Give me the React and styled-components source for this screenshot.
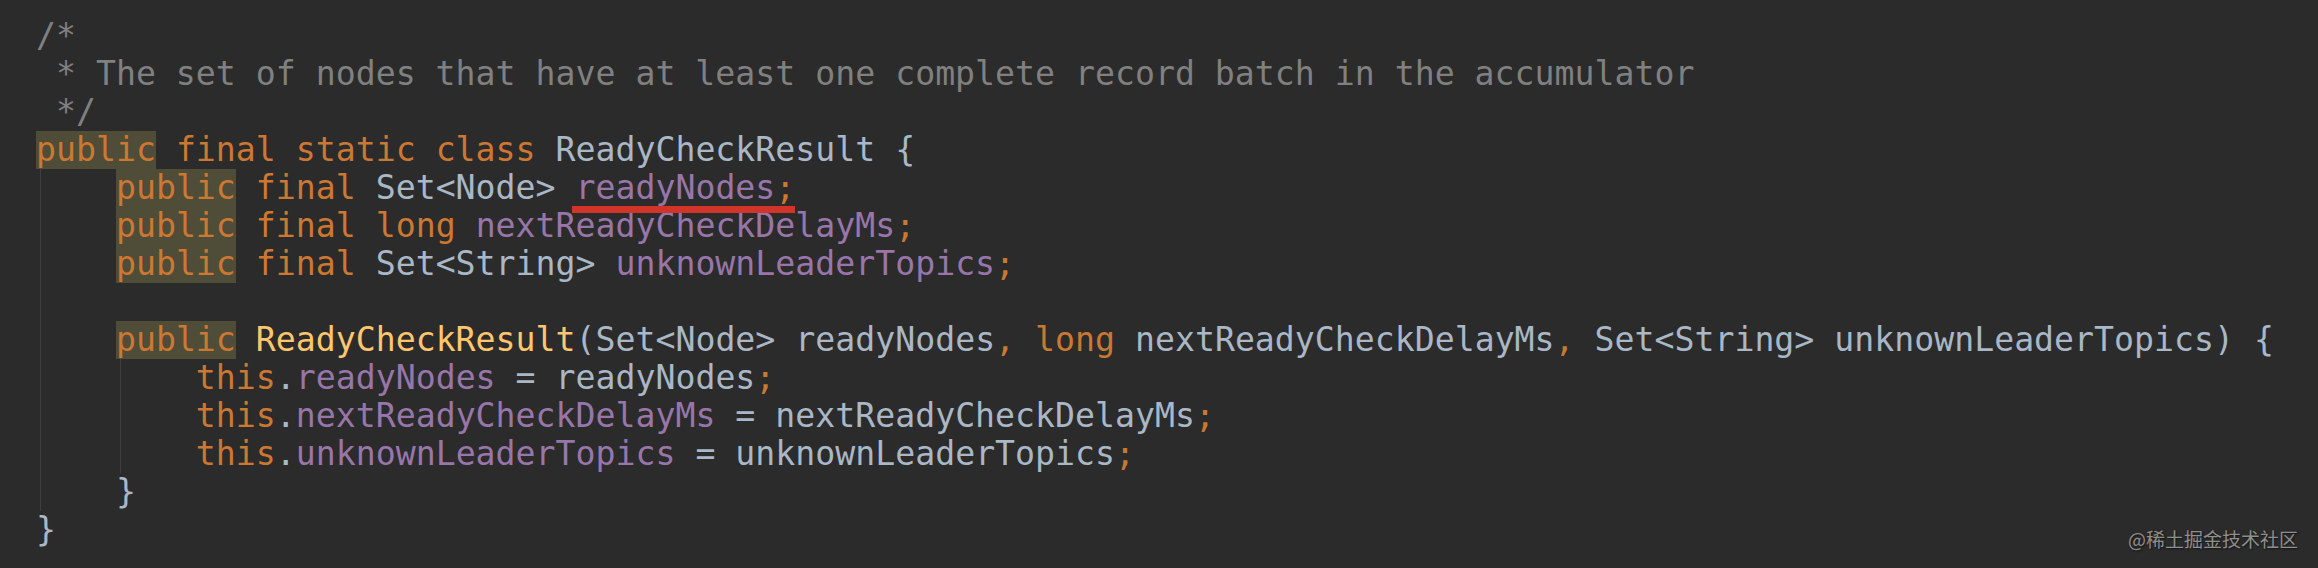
import React from "react";
import styled, { createGlobalStyle } from "styled-components";

const GlobalStyle = createGlobalStyle`
  html, body {
    margin: 0;
    padding: 0;
    background: #2b2b2b;
    overflow: hidden;
  }
`;

const colors = {
  kw: "#cc7832",
  plain: "#a9b7c6",
  field: "#9876aa",
  method: "#ffc66d",
  comment: "#808080",
};

// code lines as token lists: [kind, text]
const header = [
  [["comment", "/*"]],
  [["comment", " * The set of nodes that have at least one complete record batch in the accumulator"]],
  [["comment", " */"]],
  [
    ["hl", "public"], ["plain", " "], ["kw", "final"], ["plain", " "], ["kw", "static"],
    ["plain", " "], ["kw", "class"], ["plain", " ReadyCheckResult {"],
  ],
];

const fields = [
  [
    ["plain", "    "], ["hl", "public"], ["plain", " "], ["kw", "final"], ["plain", " Set<Node> "],
    ["mark", [["field", "readyNodes"], ["kw", ";"]]],
  ],
  [
    ["plain", "    "], ["hl", "public"], ["plain", " "], ["kw", "final"], ["plain", " "], ["kw", "long"],
    ["plain", " "], ["field", "nextReadyCheckDelayMs"], ["kw", ";"],
  ],
  [
    ["plain", "    "], ["hl", "public"], ["plain", " "], ["kw", "final"], ["plain", " Set<String> "],
    ["field", "unknownLeaderTopics"], ["kw", ";"],
  ],
  [],
  [
    ["plain", "    "], ["hl", "public"], ["plain", " "], ["method", "ReadyCheckResult"],
    ["plain", "(Set<Node> readyNodes"], ["kw", ", long "], ["plain", "nextReadyCheckDelayMs"],
    ["kw", ", "], ["plain", "Set<String> unknownLeaderTopics) {"],
  ],
];

const ctorBody = [
  [
    ["plain", "        "], ["kw", "this"], ["plain", "."], ["field", "readyNodes"],
    ["plain", " = readyNodes"], ["kw", ";"],
  ],
  [
    ["plain", "        "], ["kw", "this"], ["plain", "."], ["field", "nextReadyCheckDelayMs"],
    ["plain", " = nextReadyCheckDelayMs"], ["kw", ";"],
  ],
  [
    ["plain", "        "], ["kw", "this"], ["plain", "."], ["field", "unknownLeaderTopics"],
    ["plain", " = unknownLeaderTopics"], ["kw", ";"],
  ],
];

const Editor = styled.div`
  position: relative;
  box-sizing: border-box;
  width: 2318px;
  height: 568px;
  padding: 17px 0 0 36px;
  background: #2b2b2b;
  font-family: "DejaVu Sans Mono", "Liberation Mono", monospace;
  font-size: 33.2px;
`;

const Line = styled.div`
  height: 38px;
  line-height: 38px;
  white-space: pre;
  color: ${colors.plain};
`;

const Token = styled.span`
  color: ${(p) => colors[p.$kind] || colors.plain};
`;

const Highlight = styled.span`
  display: inline-block;
  height: 38px;
  color: ${colors.kw};
  background: #4f4d38;
`;

const Marked = styled.span`
  position: relative;

  &::after {
    content: "";
    position: absolute;
    left: -4px;
    right: 0;
    top: 38px;
    height: 7px;
    background: #d1352a;
  }
`;

// block with the faint indent guide on its left
const Block = styled.div`
  position: relative;

  &::before {
    content: "";
    position: absolute;
    top: 0;
    bottom: 0;
    left: ${(p) => p.$col * 20 + 4}px;
    width: 1px;
    background: #3e3e3e;
  }
`;

const Watermark = styled.div`
  position: absolute;
  right: 20px;
  bottom: 19px;
  font-family: "Noto Sans CJK SC", "Noto Sans", sans-serif;
  font-size: 19px;
  line-height: 20px;
  color: #8e8e8e;
  text-shadow: 1px 1px 2px rgba(0, 0, 0, 0.6);
`;

const renderTokens = (tokens) =>
  tokens.map(([kind, text], i) => {
    if (kind === "hl") return <Highlight key={i}>{text}</Highlight>;
    if (kind === "mark") return <Marked key={i}>{renderTokens(text)}</Marked>;
    return (
      <Token key={i} $kind={kind}>
        {text}
      </Token>
    );
  });

const CodeLine = ({ tokens }) => <Line>{tokens.length ? renderTokens(tokens) : " "}</Line>;

const App = () => {
  return (
    <>
      <GlobalStyle />
      <Editor>
        {header.map((t, i) => (
          <CodeLine key={i} tokens={t} />
        ))}
        <Block $col={0}>
          {fields.map((t, i) => (
            <CodeLine key={i} tokens={t} />
          ))}
          <Block $col={4}>
            {ctorBody.map((t, i) => (
              <CodeLine key={i} tokens={t} />
            ))}
          </Block>
          <CodeLine tokens={[["plain", "    }"]]} />
        </Block>
        <CodeLine tokens={[["plain", "}"]]} />
        <Watermark>@稀土掘金技术社区</Watermark>
      </Editor>
    </>
  );
};

export default App;
